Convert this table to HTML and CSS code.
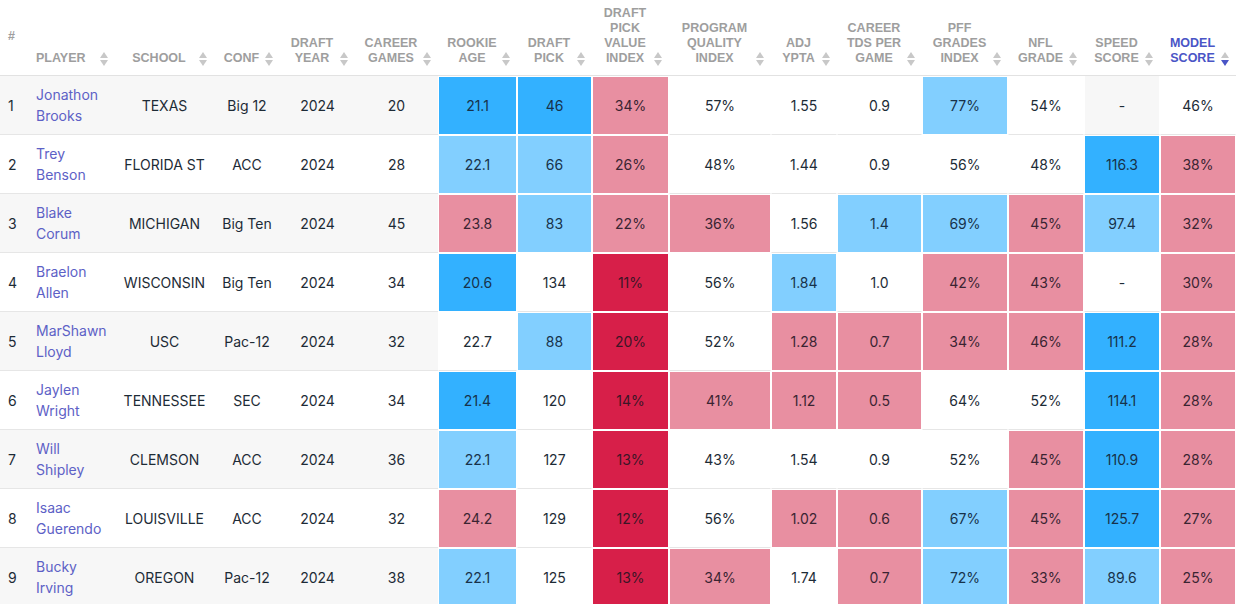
FILE: index.html
```html
<!DOCTYPE html>
<html lang="en">
<head>
<meta charset="utf-8">
<title>Rookie RB Model</title>
<link rel="stylesheet" href="styles.css">
</head>
<body>
<table class="grid">
  <colgroup>
    <col class="w-num"><col class="w-player"><col class="w-school"><col class="w-conf"><col class="w-year"><col class="w-games">
    <col class="w-age"><col class="w-pick"><col class="w-dpvi"><col class="w-pqi"><col class="w-ypta"><col class="w-tds">
    <col class="w-pff"><col class="w-nfl"><col class="w-speed"><col class="w-model">
  </colgroup>
  <thead>
    <tr>
      <th class="th-num">#</th>
      <th class="th-left"><div class="hd"><span class="lbl">PLAYER</span><svg class="sort" viewBox="0 0 8 14"><path d="M0 6 L4 0 L8 6 Z"/><path d="M0 8 L8 8 L4 14 Z"/></svg></div></th>
      <th><div class="hd"><span class="lbl">SCHOOL</span><svg class="sort" viewBox="0 0 8 14"><path d="M0 6 L4 0 L8 6 Z"/><path d="M0 8 L8 8 L4 14 Z"/></svg></div></th>
      <th><div class="hd"><span class="lbl">CONF</span><svg class="sort" viewBox="0 0 8 14"><path d="M0 6 L4 0 L8 6 Z"/><path d="M0 8 L8 8 L4 14 Z"/></svg></div></th>
      <th><div class="hd"><span class="lbl">DRAFT YEAR</span><svg class="sort" viewBox="0 0 8 14"><path d="M0 6 L4 0 L8 6 Z"/><path d="M0 8 L8 8 L4 14 Z"/></svg></div></th>
      <th><div class="hd"><span class="lbl">CAREER GAMES</span><svg class="sort" viewBox="0 0 8 14"><path d="M0 6 L4 0 L8 6 Z"/><path d="M0 8 L8 8 L4 14 Z"/></svg></div></th>
      <th><div class="hd"><span class="lbl">ROOKIE AGE</span><svg class="sort" viewBox="0 0 8 14"><path d="M0 6 L4 0 L8 6 Z"/><path d="M0 8 L8 8 L4 14 Z"/></svg></div></th>
      <th><div class="hd"><span class="lbl">DRAFT PICK</span><svg class="sort" viewBox="0 0 8 14"><path d="M0 6 L4 0 L8 6 Z"/><path d="M0 8 L8 8 L4 14 Z"/></svg></div></th>
      <th><div class="hd"><span class="lbl">DRAFT PICK VALUE INDEX</span><svg class="sort" viewBox="0 0 8 14"><path d="M0 6 L4 0 L8 6 Z"/><path d="M0 8 L8 8 L4 14 Z"/></svg></div></th>
      <th><div class="hd"><span class="lbl">PROGRAM QUALITY INDEX</span><svg class="sort" viewBox="0 0 8 14"><path d="M0 6 L4 0 L8 6 Z"/><path d="M0 8 L8 8 L4 14 Z"/></svg></div></th>
      <th><div class="hd"><span class="lbl">ADJ YPTA</span><svg class="sort" viewBox="0 0 8 14"><path d="M0 6 L4 0 L8 6 Z"/><path d="M0 8 L8 8 L4 14 Z"/></svg></div></th>
      <th><div class="hd"><span class="lbl">CAREER TDS PER GAME</span><svg class="sort" viewBox="0 0 8 14"><path d="M0 6 L4 0 L8 6 Z"/><path d="M0 8 L8 8 L4 14 Z"/></svg></div></th>
      <th><div class="hd"><span class="lbl">PFF GRADES INDEX</span><svg class="sort" viewBox="0 0 8 14"><path d="M0 6 L4 0 L8 6 Z"/><path d="M0 8 L8 8 L4 14 Z"/></svg></div></th>
      <th><div class="hd"><span class="lbl">NFL GRADE</span><svg class="sort" viewBox="0 0 8 14"><path d="M0 6 L4 0 L8 6 Z"/><path d="M0 8 L8 8 L4 14 Z"/></svg></div></th>
      <th><div class="hd"><span class="lbl">SPEED SCORE</span><svg class="sort" viewBox="0 0 8 14"><path d="M0 6 L4 0 L8 6 Z"/><path d="M0 8 L8 8 L4 14 Z"/></svg></div></th>
      <th class="th-active"><div class="hd"><span class="lbl">MODEL SCORE</span><svg class="sort" viewBox="0 0 8 14"><path d="M0 6 L4 0 L8 6 Z"/><path class="on" d="M0 8 L8 8 L4 14 Z"/></svg></div></th>
    </tr>
  </thead>
  <tbody>
    <tr>
      <td class="num">1</td><td class="name">Jonathon Brooks</td><td>TEXAS</td><td>Big 12</td><td>2024</td><td>20</td>
      <td class="h db">21.1</td><td class="h db">46</td><td class="h pk">34%</td><td class="h w">57%</td><td class="h w">1.55</td><td class="h w">0.9</td><td class="h lb">77%</td><td class="h w">54%</td><td class="h nil">-</td><td class="h w">46%</td>
    </tr>
    <tr>
      <td class="num">2</td><td class="name">Trey Benson</td><td>FLORIDA ST</td><td>ACC</td><td>2024</td><td>28</td>
      <td class="h lb">22.1</td><td class="h lb">66</td><td class="h pk">26%</td><td class="h w">48%</td><td class="h w">1.44</td><td class="h w">0.9</td><td class="h w">56%</td><td class="h w">48%</td><td class="h db">116.3</td><td class="h pk">38%</td>
    </tr>
    <tr>
      <td class="num">3</td><td class="name">Blake Corum</td><td>MICHIGAN</td><td>Big Ten</td><td>2024</td><td>45</td>
      <td class="h pk">23.8</td><td class="h lb">83</td><td class="h pk">22%</td><td class="h pk">36%</td><td class="h w">1.56</td><td class="h lb">1.4</td><td class="h lb">69%</td><td class="h pk">45%</td><td class="h lb">97.4</td><td class="h pk">32%</td>
    </tr>
    <tr>
      <td class="num">4</td><td class="name">Braelon Allen</td><td>WISCONSIN</td><td>Big Ten</td><td>2024</td><td>34</td>
      <td class="h db">20.6</td><td class="h w">134</td><td class="h dr">11%</td><td class="h w">56%</td><td class="h lb">1.84</td><td class="h w">1.0</td><td class="h pk">42%</td><td class="h pk">43%</td><td class="h nil">-</td><td class="h pk">30%</td>
    </tr>
    <tr>
      <td class="num">5</td><td class="name">MarShawn Lloyd</td><td>USC</td><td>Pac-12</td><td>2024</td><td>32</td>
      <td class="h w">22.7</td><td class="h lb">88</td><td class="h dr">20%</td><td class="h w">52%</td><td class="h pk">1.28</td><td class="h pk">0.7</td><td class="h pk">34%</td><td class="h pk">46%</td><td class="h db">111.2</td><td class="h pk">28%</td>
    </tr>
    <tr>
      <td class="num">6</td><td class="name">Jaylen Wright</td><td>TENNESSEE</td><td>SEC</td><td>2024</td><td>34</td>
      <td class="h db">21.4</td><td class="h w">120</td><td class="h dr">14%</td><td class="h pk">41%</td><td class="h pk">1.12</td><td class="h pk">0.5</td><td class="h w">64%</td><td class="h w">52%</td><td class="h db">114.1</td><td class="h pk">28%</td>
    </tr>
    <tr>
      <td class="num">7</td><td class="name">Will Shipley</td><td>CLEMSON</td><td>ACC</td><td>2024</td><td>36</td>
      <td class="h lb">22.1</td><td class="h w">127</td><td class="h dr">13%</td><td class="h w">43%</td><td class="h w">1.54</td><td class="h w">0.9</td><td class="h w">52%</td><td class="h pk">45%</td><td class="h db">110.9</td><td class="h pk">28%</td>
    </tr>
    <tr>
      <td class="num">8</td><td class="name">Isaac Guerendo</td><td>LOUISVILLE</td><td>ACC</td><td>2024</td><td>32</td>
      <td class="h pk">24.2</td><td class="h w">129</td><td class="h dr">12%</td><td class="h w">56%</td><td class="h pk">1.02</td><td class="h pk">0.6</td><td class="h lb">67%</td><td class="h pk">45%</td><td class="h db">125.7</td><td class="h pk">27%</td>
    </tr>
    <tr>
      <td class="num">9</td><td class="name">Bucky Irving</td><td>OREGON</td><td>Pac-12</td><td>2024</td><td>38</td>
      <td class="h lb">22.1</td><td class="h w">125</td><td class="h dr">13%</td><td class="h pk">34%</td><td class="h w">1.74</td><td class="h pk">0.7</td><td class="h lb">72%</td><td class="h pk">33%</td><td class="h lb">89.6</td><td class="h pk">25%</td>
    </tr>
  </tbody>
</table>
</body>
</html>
```
FILE: styles.css
```css
html, body {
  margin: 0;
  padding: 0;
  background: #fff;
  overflow: hidden;
}

.grid {
  width: 1236px;
  table-layout: fixed;
  border-collapse: separate;
  border-spacing: 0;
  font-family: Inter, "Liberation Sans", sans-serif;
  font-size: 14px;
  color: #1d2b36;
}

.w-num { width: 28px; }
.w-player { width: 87px; }
.w-school { width: 99px; }
.w-conf { width: 66px; }
.w-year { width: 75px; }
.w-games { width: 83px; }
.w-age { width: 79px; }
.w-pick { width: 75px; }
.w-dpvi { width: 77px; }
.w-pqi { width: 102px; }
.w-ypta { width: 66px; }
.w-tds { width: 85px; }
.w-pff { width: 86px; }
.w-nfl { width: 76px; }
.w-speed { width: 76px; }
.w-model { width: 76px; }

/* header */
.grid th {
  font-family: "Liberation Sans", Arial, sans-serif;
  font-weight: 700;
  font-size: 12.5px;
  line-height: 15px;
  color: #9e9e9e;
  text-transform: uppercase;
  vertical-align: bottom;
  padding: 6px 7px 9px 8px;
  border-bottom: 1px solid #e2e2e2;
  background: #fff;
  height: 60px;
}

.grid th.th-num {
  vertical-align: middle;
  text-align: left;
  padding-right: 0;
}

.hd {
  display: flex;
  align-items: flex-end;
  gap: 4px;
}

.lbl {
  flex: 1;
  text-align: center;
}

.th-left .lbl {
  text-align: left;
}

.sort {
  flex: none;
  width: 8px;
  height: 14px;
  fill: #c8c8c8;
}

.grid th.th-active {
  color: #4a55c6;
}

.th-active .sort .on {
  fill: #4a55c6;
}

/* body */
.grid td {
  padding: 8px 8px;
  line-height: 21px;
  height: 42px;
  text-align: center;
  vertical-align: middle;
  border-bottom: 1px solid #e6e6e6;
  white-space: nowrap;
}

.grid tbody tr:nth-child(odd) td {
  background: #f7f7f7;
}

.grid td.num {
  text-align: left;
  padding-right: 0;
}

.grid td.name {
  text-align: left;
  white-space: normal;
  color: #5d61c6;
  padding-right: 4px;
}

.grid td.h {
  border-left: 1px solid #fff;
  border-right: 1px solid #fff;
}

.grid tbody tr td.w { background: #fff; }
.grid tbody tr td.db { background: #33b1ff; border-bottom-color: #fff; box-shadow: inset 0 1px 0 #fff; }
.grid tbody tr td.lb { background: #82cfff; border-bottom-color: #fff; box-shadow: inset 0 1px 0 #fff; }
.grid tbody tr td.pk { background: #e88fa1; border-bottom-color: #fff; box-shadow: inset 0 1px 0 #fff; }
.grid tbody tr td.dr { background: #d71f49; border-bottom-color: #fff; box-shadow: inset 0 1px 0 #fff; }

.grid td.db, .grid td.lb { color: #17324a; }
.grid td.pk { color: #3a2432; }
.grid td.dr { color: #3c1526; }
```
